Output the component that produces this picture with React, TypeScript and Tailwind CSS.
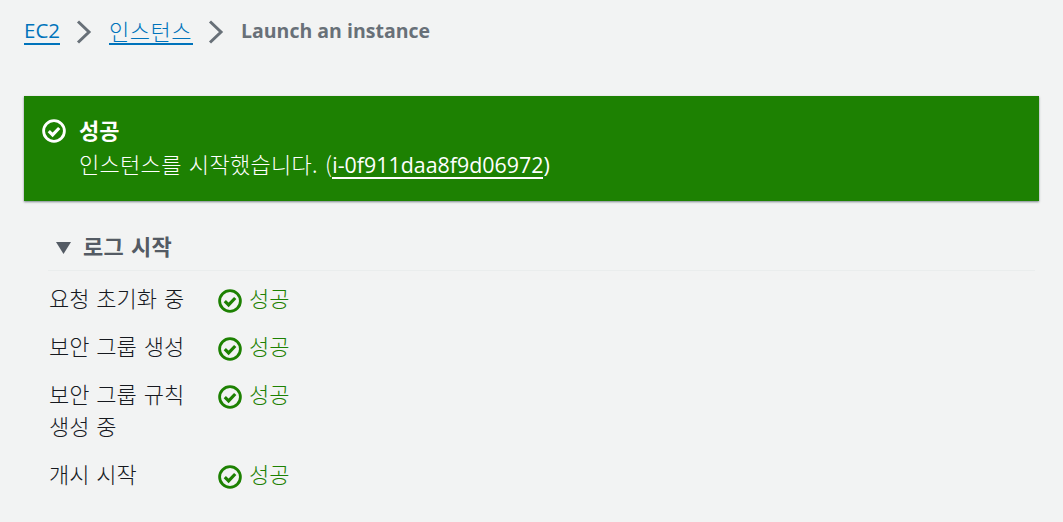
import React from 'react';

const font = "font-['Open_Sans','Noto_Sans_CJK_KR',sans-serif]";
const korean = "font-['Noto_Sans_CJK_KR','Open_Sans',sans-serif] text-[22px] [word-spacing:2px]";

const CheckCircle = ({ className }: { className: string }) => (
    <svg viewBox="0 0 24 24" className={className} fill="none" stroke="currentColor">
        <circle cx="12" cy="12" r="10.4" strokeWidth="2.8" />
        <path d="M6.8 12.2l3.8 3.7L17.2 9" strokeWidth="3.2" />
    </svg>
);

const Chevron = () => (
    <svg viewBox="0 0 16 24" className="w-[16px] h-[24px] mt-[2px] text-[#687078]" fill="none" stroke="currentColor">
        <path d="M2 1.5l11 10.5L2 22.5" strokeWidth="3" />
    </svg>
);

const steps = [
    { label: '요청 초기화 중' },
    { label: '보안 그룹 생성' },
    { label: '보안 그룹 규칙 생성 중' },
    { label: '개시 시작' },
];

export default function App() {
    return (
        <div className={`${font} w-[1063px] h-[522px] overflow-hidden bg-[#f2f3f3] px-6 text-[20px] text-[#16191f]`}>
            <nav className="flex items-center h-[62px] pb-[1px]">
                <a className="text-[#0073bb] leading-[26px] border-b-2 border-[#0073bb] w-[36px] text-[20.5px]">EC2</a>
                <span className="ml-[16px] mr-[17px]"><Chevron /></span>
                <a className={`${korean} text-[#0073bb] leading-[26px] border-b-2 border-[#0073bb] w-[84px] font-light tracking-[0.5px]`}>인스턴스</a>
                <span className="ml-[15px] mr-[17px]"><Chevron /></span>
                <span className="font-bold text-[#687078] text-[19.5px]">Launch an instance</span>
            </nav>

            <div className="mt-[34px] h-[105px] bg-[#1d8102] text-white shadow-[0_1px_2px_rgba(0,28,36,0.5)] flex pl-[18px] pt-[21px]">
                <CheckCircle className="w-[24px] h-[24px] mt-[2px] shrink-0" />
                <div className="ml-[13px] leading-[32px] -mt-[4px]">
                    <div className={`${korean} font-bold leading-[32px]`}>성공</div>
                    <div className="flex items-baseline mt-[2px]">
                        <span className={`${korean} leading-[32px] font-light tracking-[0.3px]`}>인스턴스를 시작했습니다. (</span>
                        <a className="border-b-2 border-white text-[21.4px] leading-[25px]">i-0f911daa8f9d06972</a>
                        <span className="text-[21.4px]">)</span>
                    </div>
                </div>
            </div>

            <section className="mt-[22px] ml-[24px] mr-[4px]">
                <div className="flex items-center h-[48px] border-b border-[#eaeded] pl-[8px] pb-[1px]">
                    <svg viewBox="0 0 15 12" className="w-[15px] h-[12px] mt-[3px] text-[#545b64]" fill="currentColor">
                        <path d="M0 0h15L7.5 12z" />
                    </svg>
                    <span className={`${korean} ml-[12px] -mt-[2px] font-bold tracking-[0.2px] text-[#545b64]`}>로그 시작</span>
                </div>
                <div className="mt-[12px] flex flex-col gap-[16px]">
                    {steps.map((step) => (
                        <div key={step.label} className="flex leading-[32px]">
                            <div className={`${korean} w-[140px] ml-[1px] mr-[29px] -mt-[2px] pb-[2px] leading-[32px] font-light`}>{step.label}</div>
                            <div className="flex text-[#1d8102]">
                                <CheckCircle className="w-[24px] h-[24px] mt-[6px] shrink-0" />
                                <span className={`${korean} ml-[7px] -mt-[2px] leading-[32px] font-light`}>성공</span>
                            </div>
                        </div>
                    ))}
                </div>
            </section>
        </div>
    );
}
